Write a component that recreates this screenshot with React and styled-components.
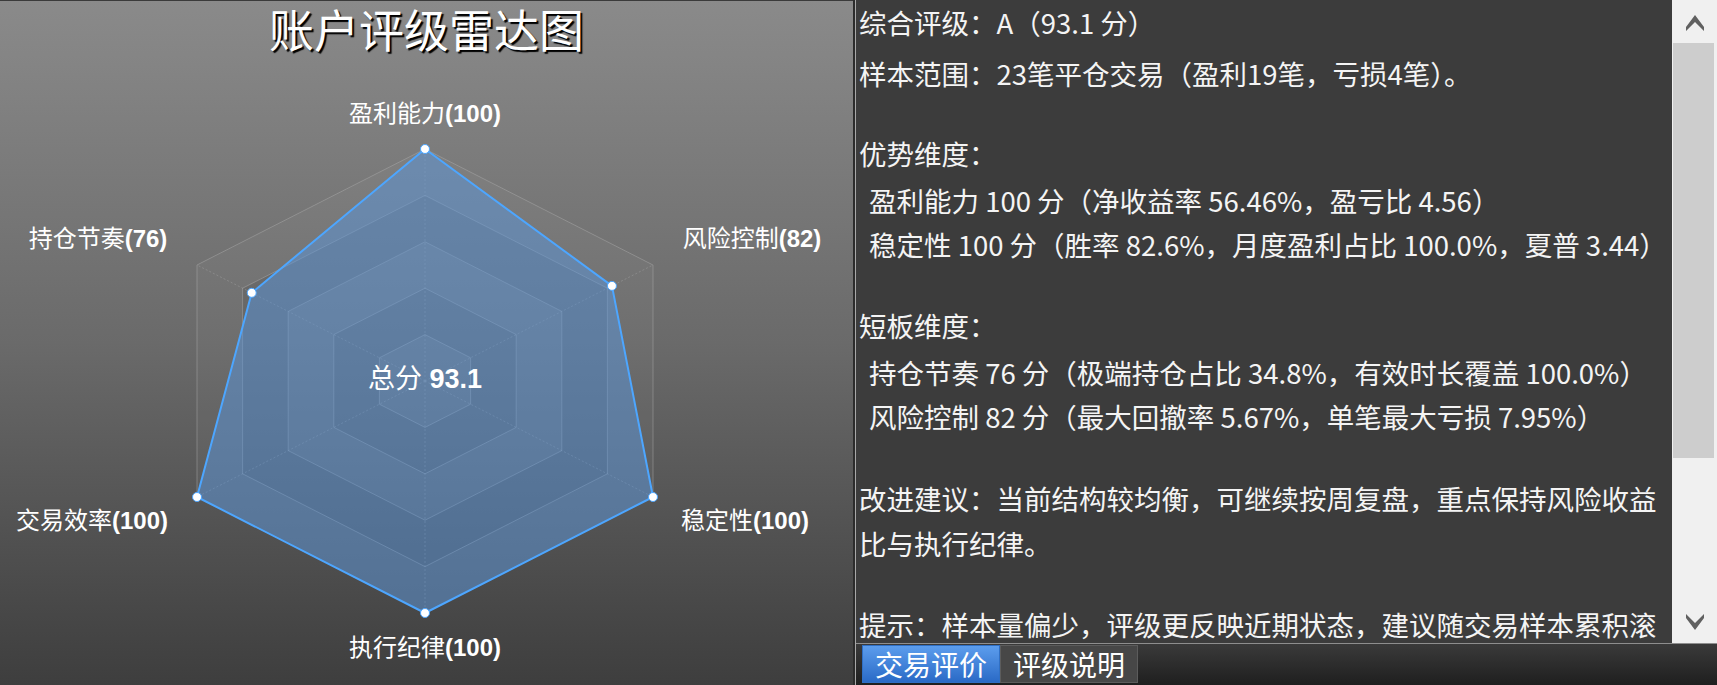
import React from 'react';
import styled, { createGlobalStyle } from 'styled-components';

const GlobalStyle = createGlobalStyle`
  html, body {
    margin: 0;
    padding: 0;
    background: #3c3c3c;
    overflow: hidden;
  }
  * {
    box-sizing: border-box;
  }
`;

const TITLE_H = 52;

const Page = styled.div`
  display: flex;
  width: 1717px;
  height: 685px;
  font-family: "Noto Sans CJK SC", "Liberation Sans", sans-serif;
`;

const ChartPanel = styled.section`
  display: flex;
  flex-direction: column;
  width: 853px;
  height: 685px;
  border-top: 1px solid #3a3a3a;
  background: linear-gradient(to bottom, #8a8a8a 0%, #6a6a6a 50%, #3e3e3e 100%);
`;

const Title = styled.h1`
  display: flex;
  align-items: center;
  justify-content: center;
  margin: 0;
  height: ${TITLE_H}px;
  padding-top: 2px;
  line-height: 1;
  font-size: 45px;
  font-weight: 400;
  color: #ffffff;
  text-shadow: 2px 2px 1px #000000;
`;

const Chart = styled.svg`
  display: block;
  width: 853px;
  height: ${684 - TITLE_H}px;
`;

const Divider = styled.div`
  width: 3px;
  height: 685px;
  background: #2c2c2c;
  border-right: 1px solid #a8a8a8;
`;

const InfoPanel = styled.section`
  display: flex;
  flex-direction: column;
  flex: 1;
  min-width: 0;
  height: 685px;
  background: #3c3c3c;
`;

const ScrollArea = styled.div`
  display: flex;
  height: 643px;
`;

const TextArea = styled.div`
  flex: 1;
  min-width: 0;
  overflow: hidden;
  padding-left: 3px;
  color: #f4f4f4;
  font-size: 27.5px;
`;

const Line = styled.div`
  height: 44px;
  line-height: 44px;
  margin-top: ${(p) => p.$gap || 0}px;
  padding-left: ${(p) => (p.$indent ? 10 : 0)}px;
  white-space: nowrap;
`;

const ScrollBar = styled.div`
  display: flex;
  flex-direction: column;
  flex: none;
  width: 45px;
  background: #f0f0f0;
`;

const ArrowButton = styled.div`
  display: flex;
  align-items: center;
  justify-content: center;
  height: 43px;
  padding-top: ${(p) => (p.$down ? 0 : 2)}px;
`;

const Thumb = styled.div`
  height: 415px;
  margin: 0 3px 0 1px;
  background: #cdcdcd;
`;

const Track = styled.div`
  flex: 1;
`;

const TabBar = styled.div`
  display: flex;
  align-items: flex-start;
  height: 42px;
  padding: 1px 0 0 6px;
  border-top: 1px solid #8e8e8e;
  background: linear-gradient(to bottom, #3a3a3a, #1f1f1f);
`;

const Tab = styled.div`
  height: 38px;
  line-height: 36px;
  padding: 0 12px;
  font-size: 28px;
  font-weight: 400;
  color: #ffffff;
  border: 1px solid ${(p) => (p.$active ? '#2f6fc4' : '#5c5c5c')};
  background: ${(p) =>
    p.$active ? 'linear-gradient(to bottom, #5c9ded, #2a6ac6)' : '#474747'};
`;

const Arrow = ({ down }) => (
  <svg width="18" height="16" viewBox="0 0 18 16">
    <polygon
      points={down ? '9,16 0,4 0,0 9,9 18,0 18,4' : '9,0 0,12 0,16 9,7 18,16 18,12'}
      fill="#606060"
    />
  </svg>
);

const cx = 425;
const cy = 381;
const RX = 228;
const RY = 232;
const dirs = [
  [0, -1],
  [1, -0.5],
  [1, 0.5],
  [0, 1],
  [-1, 0.5],
  [-1, -0.5],
];

const axes = [
  { name: '盈利能力', score: 100, lx: 425, ly: 113 },
  { name: '风险控制', score: 82, lx: 752, ly: 238 },
  { name: '稳定性', score: 100, lx: 745, ly: 520 },
  { name: '执行纪律', score: 100, lx: 425, ly: 647 },
  { name: '交易效率', score: 100, lx: 92, ly: 520 },
  { name: '持仓节奏', score: 76, lx: 98, ly: 238 },
];

const pt = (i, s) => [cx + dirs[i][0] * RX * s, cy + dirs[i][1] * RY * s];
const ring = (s) =>
  dirs.map((_, i) => pt(i, s).map((v) => v.toFixed(1)).join(',')).join(' ');
const ringPath = (s) =>
  dirs
    .map((_, i) => `${i === 0 ? 'M' : 'L'}${pt(i, s)[0].toFixed(1)},${pt(i, s)[1].toFixed(1)}`)
    .join(' ') + ' Z';

const levels = [1, 0.8, 0.6, 0.4, 0.2];
const bandFills = ['rgba(255,255,255,0.03)', 'rgba(0,0,0,0.05)', 'rgba(255,255,255,0.03)', 'rgba(0,0,0,0.05)', 'rgba(255,255,255,0.03)'];

function RadarChart() {
  const data = axes.map((a, i) => pt(i, a.score / 100));
  return (
    <Chart viewBox={`0 ${TITLE_H + 1} 853 ${684 - TITLE_H}`}>
      {levels.map((s, k) => (
        <path
          key={`band-${s}`}
          d={ringPath(s) + (levels[k + 1] ? ' ' + ringPath(levels[k + 1]) : '')}
          fill={bandFills[k]}
          fillRule="evenodd"
        />
      ))}
      {levels.map((s) => (
        <polygon
          key={`ring-${s}`}
          points={ring(s)}
          fill="none"
          stroke="rgba(175,175,175,0.45)"
          strokeWidth="1"
        />
      ))}
      {dirs.map((_, i) => {
        const [x, y] = pt(i, 1);
        return (
          <line
            key={`axis-${i}`}
            x1={cx}
            y1={cy}
            x2={x}
            y2={y}
            stroke="rgba(175,175,175,0.35)"
            strokeDasharray="2 2"
          />
        );
      })}
      <polygon
        points={data.map((p) => p.join(',')).join(' ')}
        fill="rgba(90,150,220,0.5)"
        stroke="#4da6ff"
        strokeWidth="2"
        strokeLinejoin="round"
      />
      {data.map(([x, y], i) => (
        <circle key={`dot-${i}`} cx={x} cy={y} r="4.5" fill="#ffffff" stroke="#4da6ff" strokeWidth="1" />
      ))}
      {axes.map((a) => (
        <text
          key={a.name}
          x={a.lx}
          y={a.ly}
          textAnchor="middle"
          dominantBaseline="central"
          fill="#ffffff"
          fontSize="24"
          fontFamily='"Liberation Sans", "Noto Sans CJK SC", sans-serif'
        >
          {a.name}
          <tspan fontWeight="bold">({a.score})</tspan>
        </text>
      ))}
      <text
        x={cx}
        y={cy - 2}
        textAnchor="middle"
        dominantBaseline="central"
        fill="#ffffff"
        fontSize="27"
        fontFamily='"Liberation Sans", "Noto Sans CJK SC", sans-serif'
      >
        总分 <tspan fontWeight="bold">93.1</tspan>
      </text>
    </Chart>
  );
}

const lines = [
  { text: '综合评级：A（93.1 分）', gap: 0 },
  { text: '样本范围：23笔平仓交易（盈利19笔，亏损4笔）。', gap: 7 },
  { text: '优势维度：', gap: 36 },
  { text: '盈利能力 100 分（净收益率 56.46%，盈亏比 4.56）', gap: 3, indent: true },
  { text: '稳定性 100 分（胜率 82.6%，月度盈利占比 100.0%，夏普 3.44）', gap: 0, indent: true },
  { text: '短板维度：', gap: 37 },
  { text: '持仓节奏 76 分（极端持仓占比 34.8%，有效时长覆盖 100.0%）', gap: 3, indent: true },
  { text: '风险控制 82 分（最大回撤率 5.67%，单笔最大亏损 7.95%）', gap: 0, indent: true },
  { text: '改进建议：当前结构较均衡，可继续按周复盘，重点保持风险收益', gap: 38 },
  { text: '比与执行纪律。', gap: 1 },
  { text: '提示：样本量偏少，评级更反映近期状态，建议随交易样本累积滚', gap: 37 },
];

export default function App() {
  return (
    <>
      <GlobalStyle />
      <Page>
        <ChartPanel>
          <Title>账户评级雷达图</Title>
          <RadarChart />
        </ChartPanel>
        <Divider />
        <InfoPanel>
          <ScrollArea>
            <TextArea>
              {lines.map((l) => (
                <Line key={l.text} $gap={l.gap} $indent={l.indent}>
                  {l.text}
                </Line>
              ))}
            </TextArea>
            <ScrollBar>
              <ArrowButton>
                <Arrow />
              </ArrowButton>
              <Thumb />
              <Track />
              <ArrowButton $down>
                <Arrow down />
              </ArrowButton>
            </ScrollBar>
          </ScrollArea>
          <TabBar>
            <Tab $active>交易评价</Tab>
            <Tab>评级说明</Tab>
          </TabBar>
        </InfoPanel>
      </Page>
    </>
  );
}
